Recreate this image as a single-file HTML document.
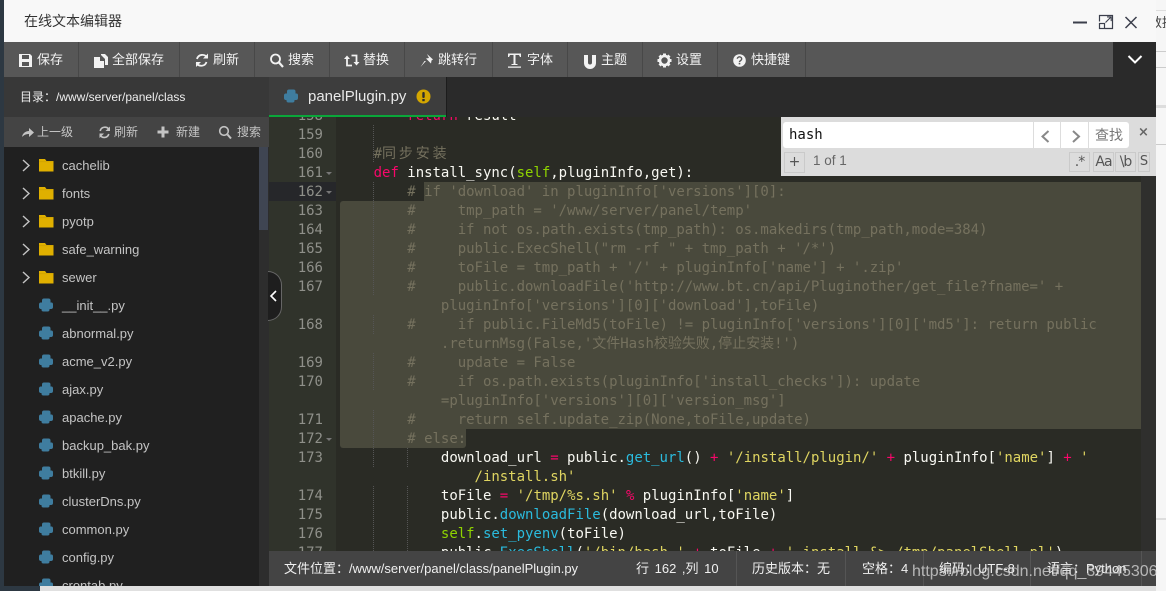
<!DOCTYPE html>
<html><head><meta charset="utf-8"><style>
html,body{margin:0;padding:0}
body{width:1166px;height:591px;overflow:hidden;position:relative;background:#fff;font-family:"Liberation Sans","Noto Sans CJK SC",sans-serif}
div,span.a,svg.a{position:absolute}
.tb{top:42px;height:35px;line-height:35px;font-size:13px;color:#f2f2f2;white-space:nowrap}
.sep{top:42px;width:1px;height:35px;background:#484848}
.f{left:62px;font-size:13px;color:#c4c4c4;line-height:16px;white-space:nowrap;margin-top:1px}
.n{left:269px;width:54px;text-align:right;font:14px/19px "DejaVu Sans Mono",monospace;color:#8f908a;margin-top:1px}
.l{left:340px;font:14px/19px "DejaVu Sans Mono","Noto Sans CJK SC",monospace;color:#f8f8f2;white-space:pre;letter-spacing:-.02px;margin-top:1px}
.c{color:#75715e}.p{color:#f8076a}.s{color:#dfd561}.g{color:#8fd400}.b{color:#2bbbdd}
.fold{left:326px;width:0;height:0;border-left:3px solid transparent;border-right:3px solid transparent;border-top:3px solid #777}
.st{top:551px;height:35px;line-height:35px;font-size:13px;color:#f0f0f0;white-space:nowrap}
.sd{top:551px;width:1px;height:35px;background:#555}
.sub{top:117px;height:30px;line-height:30px;font-size:12px;color:#c4c4c4;white-space:nowrap}
.ig{width:1px;background-image:linear-gradient(#555 50%,transparent 50%);background-size:1px 2px}
.opt{top:152px;height:18px;border:1px solid #cacaca;font:14px/18px "DejaVu Sans",sans-serif;color:#555;text-align:center}
</style></head><body>
<svg width="0" height="0" style="position:absolute"><defs>
<g id="py"><path fill="#3f7d9f" d="M4.5 0.5h5a2 2 0 0 1 2 2v2h1a1.5 2 0 0 1 1.500 2v2.500a2 2 0 0 1-2 2h-1.500v1a1.800 1.800 0 0 1-1.800 1.500h-4.400a1.800 1.800 0 0 1-1.800-1.500v-1h-1a2 2 0 0 1-1.500-2v-2.500a2 2 0 0 1 1.500-2h1.500v-2a2 2 0 0 1 2-2z"/></g>
<g id="fd"><path fill="#e0b000" d="M0 1h6l1.500 2H14.500v10.500H0z"/><path fill="#c79c00" d="M0 3.500h14.500v.6H0z"/></g>
<g id="ch"><path fill="none" stroke="#c4c4c4" stroke-width="1.400" d="M1 1l6 5.500-6 5.500"/></g>
</defs></svg>

<!-- outer -->
<div style="left:0;top:0;width:4px;height:591px;background:#2d3842"></div>
<div style="left:0;top:586px;width:40px;height:5px;background:#2d3842"></div>
<div style="left:40px;top:586px;width:1126px;height:5px;background:#e0e0e0"></div>
<div style="left:1156px;top:0;width:10px;height:591px;background:#f6f6f6"></div>
<div style="left:1156px;top:10px;width:10px;height:1px;background:#ddd"></div>
<div style="left:1156px;top:51px;width:10px;height:1px;background:#ccc"></div>
<div style="left:1156px;top:67px;width:10px;height:1px;background:#ccc"></div>
<div style="left:1156px;top:105px;width:10px;height:3px;background:#ddd"></div>
<div style="left:1156px;top:144px;width:10px;height:1px;background:#ccc"></div>
<div style="left:1156px;top:518px;width:10px;height:2px;background:#ddd"></div>
<div style="left:1149px;top:16px;width:17px;height:14px;overflow:hidden;font-size:13px;line-height:14px;color:#444;white-space:nowrap">数据</div>

<!-- title -->
<div style="left:4px;top:0;width:1152px;height:42px;background:#f8f8f8"></div>
<div style="left:24px;top:11px;font-size:14px;line-height:20px;color:#333">在线文本编辑器</div>
<svg class="a" style="left:1070px;top:12px" width="80" height="20" fill="none" stroke="#3b3f4c">
<path d="M3 10.500h14" stroke-width="2"/>
<path d="M29.500 9.500V3.500h13V16.500H35" stroke-width="1.200"/><rect x="29.500" y="11.500" width="5" height="5" stroke-width="1.200"/><path d="M35.500 10.500l5.500-5.500M37 4.900h4.200v4.200" stroke-width="1.100"/>
<path d="M55.500 5l11 11M66.500 5l-11 11" stroke-width="1.500"/>
</svg>

<!-- toolbar -->
<div style="left:4px;top:42px;width:1109px;height:35px;background:#575757"></div>
<div style="left:1113px;top:42px;width:43px;height:35px;background:#2a2a2a"></div>
<svg class="a" style="left:1127px;top:54px" width="16" height="11"><path d="M1.500 2l6.500 6.500 6.500-6.500" fill="none" stroke="#fff" stroke-width="2"/></svg>
<div class="sep" style="left:78px"></div><div class="sep" style="left:179px"></div><div class="sep" style="left:254px"></div><div class="sep" style="left:329px"></div><div class="sep" style="left:404px"></div><div class="sep" style="left:492px"></div><div class="sep" style="left:567px"></div><div class="sep" style="left:642px"></div><div class="sep" style="left:717px"></div><div class="sep" style="left:805px"></div>
<div class="tb" style="left:37px">保存</div><div class="tb" style="left:112px">全部保存</div><div class="tb" style="left:213px">刷新</div><div class="tb" style="left:288px">搜索</div><div class="tb" style="left:363px">替换</div><div class="tb" style="left:438px">跳转行</div><div class="tb" style="left:527px">字体</div><div class="tb" style="left:601px">主题</div><div class="tb" style="left:676px">设置</div><div class="tb" style="left:751px">快捷键</div>
<svg class="a" style="left:0;top:42px" width="810" height="35" fill="#f2f2f2">
<path d="M19 12h11l2 2v11H19zM22 13v4h7v-4zM22 20v4h7v-4z" fill-rule="evenodd"/>
<path d="M94 15h6v4h4v7H94zM101 12h4l3 3v8h-3v-6l-4-4z"/>
<g fill="none" stroke="#f2f2f2" stroke-width="1.800"><path d="M207 15.500a5.500 5.500 0 0 0-10 1.500M196.500 21a5.500 5.500 0 0 0 10-1"/></g><path d="M208 11.500v5h-5zM196 25v-5h5z"/>
<g fill="none" stroke="#f2f2f2" stroke-width="1.800"><circle cx="275.500" cy="17" r="4.500"/><path d="M279 20.500l4 4.500" stroke-width="2.200"/></g>
<g fill="none" stroke="#f2f2f2" stroke-width="1.800"><path d="M347 14.500v9h5M356.500 22.500v-9h-5"/></g><path d="M344 17l3-3.500 3 3.500zM353.500 20l3 3.500 3-3.500z"/>
<path d="M427 12l6 5.500-1.500 1-.5 3-5-5 3-.5zM426 19l-5.500 6 4-6z"/>
<path d="M508 13h13v3.500h-1l-1-2h-3.500v9h2v1h-6v-1h2v-9H510l-1 2h-1zM508 26h13v1.200h-13z" transform="translate(0,-1.500)"/>
<path d="M584 13h4v7.500a2 2 0 0 0 4 0V13h4v8a6 6 0 0 1-12 0z M584 13h4v3h-4zM592 13h4v3h-4z"/>
<g transform="translate(664.500,18.500)"><circle r="4.500" fill="none" stroke="#f2f2f2" stroke-width="2.600"/><path d="M-1.500-7h3v3h-3zM-1.500 4h3v3h-3zM-7-1.500h3v3h-3zM4-1.500h3v3h-3z"/><path transform="rotate(45)" d="M-1.500-7h3v3h-3zM-1.500 4h3v3h-3zM-7-1.500h3v3h-3zM4-1.500h3v3h-3z"/></g>
<circle cx="739.500" cy="18.500" r="6.300"/><path d="M737.300 16.800a2.200 2 0 1 1 3.400 1.700c-.8.500-1.200.8-1.200 1.500" fill="none" stroke="#575757" stroke-width="1.400"/><rect x="738.700" y="20.800" width="1.600" height="1.600" fill="#575757"/>
</svg>

<!-- sidebar -->
<div style="left:4px;top:77px;width:265px;height:40px;background:#383838"></div>
<div style="left:20px;top:77px;height:40px;line-height:40px;font-size:12px;color:#eee;white-space:nowrap">目录：/www/server/panel/class</div>
<div style="left:4px;top:117px;width:265px;height:30px;background:#444"></div>
<div class="sub" style="left:37px">上一级</div><div class="sub" style="left:114px">刷新</div><div class="sub" style="left:176px">新建</div><div class="sub" style="left:237px">搜索</div>
<svg class="a" style="left:0;top:117px" width="240" height="30" fill="#c4c4c4">
<path d="M22 20c.5-4 4-6 7-6v-3l5 4.500-5 4.500v-3c-3 0-5 1-7 3z"/>
<g fill="none" stroke="#c4c4c4" stroke-width="1.600"><path d="M109 12.500a4.800 4.800 0 0 0-8.800 1.500M100 18a4.800 4.800 0 0 0 8.800-1"/></g><path d="M110 9.500v4.500h-4.500zM99.500 21v-4.500H104z"/>
<path d="M157.500 13.500h4v-4h3v4h4v3h-4v4h-3v-4h-4z"/>
<g fill="none" stroke="#c4c4c4" stroke-width="1.600"><circle cx="224" cy="14" r="4.300"/><path d="M227.500 17.500l3.500 4" stroke-width="2"/></g>
</svg>
<div style="left:4px;top:147px;width:255px;height:439px;background:#202020"></div>
<div style="left:259px;top:147px;width:10px;height:439px;background:#2d2d2d"></div>
<div style="left:259px;top:147px;width:9px;height:83px;background:#3f4552"></div>

<svg class="a" style="left:0;top:147px;height:439px" width="60" height="439">
<use href="#ch" x="22" y="12"/><use href="#ch" x="22" y="40"/><use href="#ch" x="22" y="68"/><use href="#ch" x="22" y="96"/><use href="#ch" x="22" y="124"/>
<use href="#fd" x="39" y="11"/><use href="#fd" x="39" y="39"/><use href="#fd" x="39" y="67"/><use href="#fd" x="39" y="95"/><use href="#fd" x="39" y="123"/>
<use href="#py" x="39" y="151"/><use href="#py" x="39" y="179"/><use href="#py" x="39" y="207"/><use href="#py" x="39" y="235"/><use href="#py" x="39" y="263"/><use href="#py" x="39" y="291"/><use href="#py" x="39" y="319"/><use href="#py" x="39" y="347"/><use href="#py" x="39" y="375"/><use href="#py" x="39" y="403"/><use href="#py" x="39" y="431"/>
</svg>
<div class="f" style="top:157px">cachelib</div><div class="f" style="top:185px">fonts</div><div class="f" style="top:213px">pyotp</div><div class="f" style="top:241px">safe_warning</div><div class="f" style="top:269px">sewer</div><div class="f" style="top:297px">__init__.py</div><div class="f" style="top:325px">abnormal.py</div><div class="f" style="top:353px">acme_v2.py</div><div class="f" style="top:381px">ajax.py</div><div class="f" style="top:409px">apache.py</div><div class="f" style="top:437px">backup_bak.py</div><div class="f" style="top:465px">btkill.py</div><div class="f" style="top:493px">clusterDns.py</div><div class="f" style="top:521px">common.py</div><div class="f" style="top:549px">config.py</div>
<div style="left:62px;top:577px;width:100px;height:9px;overflow:hidden"><div class="f" style="left:0;top:0">crontab.py</div></div>

<!-- editor -->
<div style="left:269px;top:117px;width:887px;height:434px;background:#2a2b25;overflow:hidden" id="ed"></div>
<div style="left:269px;top:117px;width:67px;height:434px;background:#30332b"></div>
<div style="left:269px;top:182px;width:67px;height:19px;background:#26272a"></div>
<div style="left:1141px;top:176px;width:15px;height:375px;background:#2f2f2d"></div>

<!-- selection -->
<div style="left:424px;top:182px;width:717px;height:19px;background:#49493c"></div>
<div style="left:340px;top:201px;width:801px;height:228px;background:#49493c;border-radius:3px 0 0 0"></div>
<div style="left:340px;top:429px;width:126px;height:19px;background:#49493c;border-radius:0 0 3px 3px"></div>

<!-- indent guides -->
<div class="ig" style="left:373px;top:125px;height:38px"></div>
<div class="ig" style="left:373px;top:182px;height:114px"></div>
<div class="ig" style="left:373px;top:315px;height:19px"></div>
<div class="ig" style="left:373px;top:353px;height:38px"></div>
<div class="ig" style="left:373px;top:410px;height:58px"></div>
<div class="ig" style="left:373px;top:486px;height:65px"></div>
<div class="ig" style="left:407px;top:448px;height:19px"></div>
<div class="ig" style="left:407px;top:486px;height:65px"></div>

<!-- gutter numbers -->
<div class="n" style="top:106px">158</div><div class="n" style="top:125px">159</div><div class="n" style="top:144px">160</div><div class="n" style="top:163px">161</div><div class="n" style="top:182px">162</div><div class="n" style="top:201px">163</div><div class="n" style="top:220px">164</div><div class="n" style="top:239px">165</div><div class="n" style="top:258px">166</div><div class="n" style="top:277px">167</div><div class="n" style="top:315px">168</div><div class="n" style="top:353px">169</div><div class="n" style="top:372px">170</div><div class="n" style="top:410px">171</div><div class="n" style="top:429px">172</div><div class="n" style="top:448px">173</div><div class="n" style="top:486px">174</div><div class="n" style="top:505px">175</div><div class="n" style="top:524px">176</div><div class="n" style="top:543px">177</div>
<div class="fold" style="top:172px"></div><div class="fold" style="top:191px"></div><div class="fold" style="top:438px"></div>

<!-- code -->
<div class="l" style="top:106px">        <span class="p">return</span> result</div>
<div class="l c" style="top:144px">    #<span style="letter-spacing:2.860px">同步安装</span></div>
<div class="l" style="top:163px">    <span class="p">def</span> install_sync(<span class="g">self</span>,pluginInfo,get):</div>
<div class="l c" style="top:182px">        # if 'download' in pluginInfo['versions'][0]:</div>
<div class="l c" style="top:201px">        #     tmp_path = '/www/server/panel/temp'</div>
<div class="l c" style="top:220px">        #     if not os.path.exists(tmp_path): os.makedirs(tmp_path,mode=384)</div>
<div class="l c" style="top:239px">        #     public.ExecShell("rm -rf " + tmp_path + '/*')</div>
<div class="l c" style="top:258px">        #     toFile = tmp_path + '/' + pluginInfo['name'] + '.zip'</div>
<div class="l c" style="top:277px">        #     public.downloadFile('http://www.bt.cn/api/Pluginother/get_file?fname=' +</div>
<div class="l c" style="top:296px">            pluginInfo['versions'][0]['download'],toFile)</div>
<div class="l c" style="top:315px">        #     if public.FileMd5(toFile) != pluginInfo['versions'][0]['md5']: return public</div>
<div class="l c" style="top:334px">            .returnMsg(False,'文件Hash校验失败,停止安装!')</div>
<div class="l c" style="top:353px">        #     update = False</div>
<div class="l c" style="top:372px">        #     if os.path.exists(pluginInfo['install_checks']): update</div>
<div class="l c" style="top:391px">            =pluginInfo['versions'][0]['version_msg']</div>
<div class="l c" style="top:410px">        #     return self.update_zip(None,toFile,update)</div>
<div class="l c" style="top:429px">        # else:</div>
<div class="l" style="top:448px">            download_url <span class="p">=</span> public.<span class="b">get_url</span>() <span class="p">+</span> <span class="s">'/install/plugin/'</span> <span class="p">+</span> pluginInfo[<span class="s">'name'</span>] <span class="p">+</span> <span class="s">'</span></div>
<div class="l s" style="top:467px">                /install.sh'</div>
<div class="l" style="top:486px">            toFile <span class="p">=</span> <span class="s">'/tmp/%s.sh'</span> <span class="p">%</span> pluginInfo[<span class="s">'name'</span>]</div>
<div class="l" style="top:505px">            public.<span class="b">downloadFile</span>(download_url,toFile)</div>
<div class="l" style="top:524px">            <span class="g">self</span>.<span class="b">set_pyenv</span>(toFile)</div>
<div class="l" style="top:543px">            public.<span class="b">ExecShell</span>(<span class="s">'/bin/bash '</span> <span class="p">+</span> toFile <span class="p">+</span> <span class="s">' install &amp;&gt; /tmp/panelShell.pl'</span>)</div>

<!-- tabs -->
<div style="left:269px;top:77px;width:887px;height:40px;background:#2a2a2a"></div>
<div style="left:269px;top:77px;width:177px;height:38px;background:#3d3d3d;border-bottom:2px solid #0aa63a"></div>
<div style="left:446px;top:77px;width:1px;height:40px;background:#1c1c1c"></div>
<svg class="a" style="left:284px;top:89px" width="15" height="15"><use href="#py"/></svg>
<div style="left:308px;top:77px;height:40px;line-height:40px;font-size:15px;color:#e8e8e8;white-space:nowrap">panelPlugin.py</div>
<svg class="a" style="left:416px;top:89px" width="15" height="15"><circle cx="7.500" cy="7.500" r="7" fill="#d4a600"/><rect x="6.300" y="3" width="2.400" height="6" rx="1" fill="#2d2d2d"/><rect x="6.300" y="10" width="2.400" height="2.200" fill="#2d2d2d"/></svg>

<!-- search -->
<div style="left:777px;top:117px;width:4px;height:59px;background:#2a2b25"></div>
<div style="left:781px;top:117px;width:375px;height:59px;background:#dcdcdc"></div>
<div style="left:783px;top:122px;width:346px;height:26px;background:#fff;border-radius:3px"></div>
<div style="left:1033px;top:122px;width:1px;height:26px;background:#ddd"></div>
<div style="left:1060px;top:122px;width:1px;height:26px;background:#ddd"></div>
<div style="left:1088px;top:122px;width:1px;height:26px;background:#ddd"></div>
<div style="left:789px;top:125px;font:14px/19px 'DejaVu Sans Mono',monospace;color:#111;margin-top:1px">hash</div>
<svg class="a" style="left:1040px;top:129px" width="80" height="20" fill="none" stroke="#888" stroke-width="2"><path d="M8.500 2l-6 5.500 6 5.500M33 2l6 5.500-6 5.500"/></svg>
<div style="left:1095px;top:125px;font-size:14px;line-height:20px;color:#777">查找</div>
<div style="left:1138px;top:124px;font:bold 13px/18px 'DejaVu Sans',sans-serif;color:#666">×</div>
<div style="left:784px;top:152px;width:19px;height:19px;border:1px solid #cacaca;font:14px/19px 'DejaVu Sans',sans-serif;color:#555;text-align:center">+</div>
<div style="left:813px;top:152px;font-size:13.500px;line-height:18px;color:#666">1 of 1</div>
<div class="opt" style="left:1069px;width:19px;letter-spacing:-1px">.*</div>
<div class="opt" style="left:1093px;width:19px;letter-spacing:-1px">Aa</div>
<div class="opt" style="left:1115px;width:19px;letter-spacing:-1px">\b</div>
<div class="opt" style="left:1138px;width:10px;font-size:13px">S</div>

<!-- collapse handle -->
<div style="left:268px;top:271px;width:13px;height:48px;background:#1e1e1e;border:1px solid #666;border-left:none;border-radius:0 14px 14px 0"></div>
<svg class="a" style="left:269px;top:290px" width="10" height="12"><path d="M7 1L2 6l5 5" fill="none" stroke="#fff" stroke-width="1.600"/></svg>

<!-- status -->
<div style="left:269px;top:551px;width:887px;height:35px;background:#444"></div>
<div class="st" style="left:284px">文件位置：</div>
<div class="st" style="left:349px">/www/server/panel/class/panelPlugin.py</div>
<div class="st" style="left:636px;word-spacing:2px">行 162 ,列 10</div>
<div class="st" style="left:752px">历史版本：无</div>
<div class="st" style="left:862px">空格：4</div>
<div class="st" style="left:939px">编码：UTF-8</div>
<div class="st" style="left:1047px">语言：Python</div>
<div class="sd" style="left:736px"></div><div class="sd" style="left:845px"></div><div class="sd" style="left:923px"></div><div class="sd" style="left:1030px"></div><div class="sd" style="left:1141px"></div>
<div style="left:912px;top:562px;font-size:16px;line-height:20px;color:rgba(225,225,225,.72);white-space:nowrap">https://blog.csdn.net/qq_39445306</div>
</body></html>
